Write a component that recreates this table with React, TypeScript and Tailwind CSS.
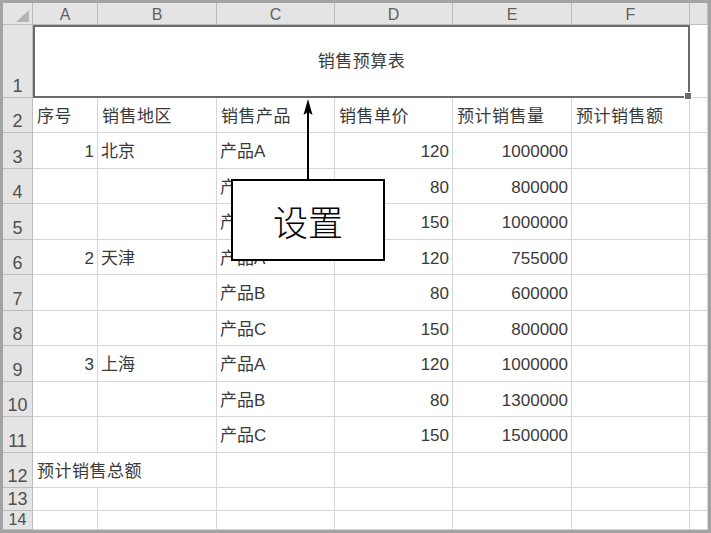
import React from "react";

const cols = ["A", "B", "C", "D", "E", "F", ""];

type Row = { n: string; a?: string; b?: string; c?: string; d?: string; e?: string };

const dataRows: Row[] = [
  { n: "3", a: "1", b: "北京", c: "产品A", d: "120", e: "1000000" },
  { n: "4", c: "产品B", d: "80", e: "800000" },
  { n: "5", c: "产品C", d: "150", e: "1000000" },
  { n: "6", a: "2", b: "天津", c: "产品A", d: "120", e: "755000" },
  { n: "7", c: "产品B", d: "80", e: "600000" },
  { n: "8", c: "产品C", d: "150", e: "800000" },
  { n: "9", a: "3", b: "上海", c: "产品A", d: "120", e: "1000000" },
  { n: "10", c: "产品B", d: "80", e: "1300000" },
  { n: "11", c: "产品C", d: "150", e: "1500000" },
];

const cell = "border-r border-b border-[#d6d6d6] bg-white flex items-center pt-[3px] overflow-hidden whitespace-nowrap";
const hdr = "border-r border-b border-[#bcbcbc] bg-[#e4e4e4] flex overflow-hidden";
const rowHdr = `${hdr} items-end justify-center pb-[2px] text-[18px] leading-none text-[#505050]`;

export default function App() {
  return (
    <div className="w-[711px] h-[533px] border-[3px] border-[#a3a3a3] bg-white font-['Liberation_Sans','Noto_Sans_CJK_SC',sans-serif] text-[17px] text-[#3a3a3a] relative overflow-hidden">
      <div className="grid grid-cols-[30px_65px_119px_118px_118px_119px_118px_18px] grid-rows-[22px_73px_35px_36px_35px_36px_35px_36px_35px_36px_35px_36px_35px_23px_19px]">
        {/* header row */}
        <div className={`${hdr} items-end justify-end pr-[3px] pb-[2px]`}>
          <svg width="13" height="12" viewBox="0 0 13 12">
            <polygon points="0,12 13,12 13,0" fill="#b5b5b5" />
          </svg>
        </div>
        {cols.map((c, i) => (
          <div key={i} className={`${hdr} items-center justify-center pt-[3px] text-[16px] leading-none text-[#606060]`}>
            {c}
          </div>
        ))}

        {/* row 1 */}
        <div className={rowHdr}>1</div>
        <div className="col-span-6 border-2 border-[#6b6b6b] bg-white flex items-center justify-center relative tracking-[0.5px]">
          销售预算表
          <div className="absolute right-[-4px] bottom-[-4px] w-[6px] h-[6px] bg-[#6b6b6b] border border-white box-content" />
        </div>
        <div className={cell} />

        {/* row 2 */}
        <div className={rowHdr}>2</div>
        {["序号", "销售地区", "销售产品", "销售单价", "预计销售量", "预计销售额"].map((t) => (
          <div key={t} className={`${cell} pl-[4px] tracking-[0.5px]`}>{t}</div>
        ))}
        <div className={cell} />

        {dataRows.map((r) => (
          <React.Fragment key={r.n}>
            <div className={rowHdr}>{r.n}</div>
            <div className={`${cell} justify-end pr-[3px]`}>{r.a ?? ""}</div>
            <div className={`${cell} pl-[3px]`}>{r.b ?? ""}</div>
            <div className={`${cell} pl-[3px]`}>{r.c ?? ""}</div>
            <div className={`${cell} justify-end pr-[3px]`}>{r.d ?? ""}</div>
            <div className={`${cell} justify-end pr-[3px]`}>{r.e ?? ""}</div>
            <div className={cell} />
            <div className={cell} />
          </React.Fragment>
        ))}

        {/* row 12 */}
        <div className={rowHdr}>12</div>
        <div className={`${cell} col-span-2 pl-[4px] tracking-[0.5px]`}>预计销售总额</div>
        <div className={cell} />
        <div className={cell} />
        <div className={cell} />
        <div className={cell} />
        <div className={cell} />

        {/* row 13 */}
        <div className={rowHdr}>13</div>
        {cols.map((_, i) => (
          <div key={i} className={cell} />
        ))}

        {/* row 14 */}
        <div className={`${hdr} items-end justify-center pb-[1px] text-[16px] leading-none text-[#505050]`}>14</div>
        {cols.map((_, i) => (
          <div key={i} className={cell} />
        ))}
      </div>

      {/* callout arrow */}
      <svg className="absolute left-[297px] top-[95px]" width="16" height="84" viewBox="0 0 16 84">
        <line x1="8" y1="10" x2="8" y2="84" stroke="#000" strokeWidth="2" />
        <polygon points="8,1 3.5,17 8,14 12.5,17" fill="#000" />
      </svg>

      {/* callout box */}
      <div className="absolute left-[228px] top-[176px] w-[154px] h-[82px] border-2 border-black bg-white flex items-center justify-center text-[35px] text-black leading-none font-['Noto_Sans_CJK_SC',sans-serif] font-light">
        设置
      </div>
    </div>
  );
}
